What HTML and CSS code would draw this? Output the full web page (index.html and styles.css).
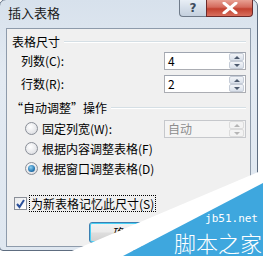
FILE: index.html
```html
<!DOCTYPE html>
<html>
<head>
<meta charset="utf-8">
<link rel="stylesheet" href="styles.css">
</head>
<body>
<div class="window">
  <div class="titlebar">
    <span class="title">插入表格</span>
    <div class="caption-btns">
      <div class="btn-help">?</div>
      <div class="btn-close">
        <svg width="16" height="12" viewBox="0 0 16 12"><path d="M2 1 L14 11 M14 1 L2 11" stroke="#fff" stroke-width="3" stroke-linecap="round"/></svg>
      </div>
    </div>
  </div>
  <div class="client">
    <div class="group-head"><span>表格尺寸</span><i class="sep"></i></div>
    <div class="row first">
      <span class="label">列数(<u>C</u>):</span>
      <div class="spin"><span class="val">4</span><div class="arrows"><b class="up"></b><b class="down"></b></div></div>
    </div>
    <div class="row second">
      <span class="label">行数(<u>R</u>):</span>
      <div class="spin"><span class="val">2</span><div class="arrows"><b class="up"></b><b class="down"></b></div></div>
    </div>
    <div class="group-head g2"><span>“自动调整”操作</span><i class="sep"></i></div>
    <div class="radio-row r1">
      <span class="radio"></span><span class="rlabel">固定列宽(<u>W</u>):</span>
      <div class="spin disabled"><span class="val">自动</span><div class="arrows"><b class="up"></b><b class="down"></b></div></div>
    </div>
    <div class="radio-row">
      <span class="radio"></span><span class="rlabel">根据内容调整表格(<u>F</u>)</span>
    </div>
    <div class="radio-row">
      <span class="radio on"></span><span class="rlabel">根据窗口调整表格(<u>D</u>)</span>
    </div>
    <div class="check-row">
      <span class="check"><svg width="11" height="11" viewBox="0 0 11 11"><path d="M2 6 L4.5 9 L9 2" fill="none" stroke="#2a4f9a" stroke-width="2"/></svg></span>
      <span class="clabel">为新表格记忆此尺寸(<u>S</u>)</span>
    </div>
    <div class="btn-row">
      <div class="button">确定</div>
    </div>
  </div>
</div>
<svg class="watermark" width="263" height="256" viewBox="0 0 263 256">
  <polygon points="60,256 263,170 263,185 123,256" fill="#ffffff"/>
  <polygon points="123,256 263,183 263,256" fill="#3ea7de"/>
</svg>
<div class="wm-text">
  <div class="wm-url">jb51.net</div>
  <div class="wm-name">脚本之家</div>
</div>
</body>
</html>
```
FILE: styles.css
```css
html, body {
  margin: 0;
  padding: 0;
  width: 263px;
  height: 256px;
  overflow: hidden;
  background: #ffffff;
  font-family: "SimSun", "Noto Sans CJK SC", "Liberation Sans", sans-serif;
  font-size: 12px;
  color: #000;
}
.window {
  position: relative;
  width: 259px;
  height: 252px;
  margin-left: -1px;
  margin-top: -1px;
  border: 1px solid #5e6d80;
  border-radius: 7px 7px 4px 4px;
  background: linear-gradient(180deg, #d7e1ec 0%, #e3eaf2 30%, #dfe7f0 100%);
  box-sizing: border-box;
  display: flex;
  flex-direction: column;
}
.titlebar {
  height: 28px;
  display: flex;
  align-items: flex-start;
  justify-content: space-between;
  box-sizing: border-box;
}
.title {
  margin-top: 5px;
  margin-left: 8px;
  font-size: 13px;
  line-height: 16px;
  color: #1a1a1a;
}
.caption-btns {
  display: flex;
  margin-right: 4px;
}
.btn-help {
  width: 27px;
  height: 17px;
  box-sizing: border-box;
  border: 1px solid #6f7b8a;
  border-top: none;
  border-right: none;
  border-radius: 0 0 0 4px;
  background: linear-gradient(180deg, #e8eef5 0%, #d5dee9 50%, #c4d0de 100%);
  color: #3c4a5c;
  font-family: "DejaVu Sans", sans-serif;
  font-size: 12px;
  line-height: 16px;
  text-align: center;
  font-weight: bold;
}
.btn-close {
  width: 47px;
  height: 17px;
  box-sizing: border-box;
  border: 1px solid #6c2a2a;
  border-top: none;
  border-radius: 0 0 4px 0;
  background: linear-gradient(180deg, #e8a093 0%, #d46a5c 45%, #c2412f 55%, #d86f5e 100%);
  display: flex;
  align-items: center;
  justify-content: center;
}
.client {
  margin: 0 6px 3px 6px;
  height: 221px;
  border: 1px solid #8e9bab;
  background: #f0f0f0;
  box-sizing: border-box;
  padding: 6px 4px 0 5px;
  display: flex;
  flex-direction: column;
}
.group-head {
  display: flex;
  align-items: center;
  height: 14px;
  line-height: 14px;
}
.group-head span { white-space: nowrap; margin-right: 4px; }
.group-head .sep {
  flex: 1;
  height: 0;
  border-top: 1px solid #d5dfe5;
  border-bottom: 1px solid #ffffff;
}
.g2 { margin-top: 8px; margin-left: -1px; }
.row {
  display: flex;
  align-items: center;
  justify-content: space-between;
  height: 18px;
  padding-left: 9px;
}
.row.first { margin-top: 3px; }
.row.second { margin-top: 5px; }
.label u, .rlabel u, .clabel u { text-decoration: none; }
.spin {
  width: 82px;
  height: 18px;
  box-sizing: border-box;
  border: 1px solid #abadb3;
  border-top-color: #9fa5b0;
  background: #fff;
  display: flex;
  align-items: center;
  justify-content: space-between;
}
.spin .val { padding-left: 3px; line-height: 16px; }
.spin.disabled { background: #f4f4f4; border-color: #c6c8cc; color: #8d8d8d; }
.arrows {
  width: 15px;
  height: 16px;
  display: flex;
  flex-direction: column;
  margin-right: 1px;
}
.arrows b {
  flex: 1;
  position: relative;
  background: linear-gradient(180deg, #f2f4f8, #d9e0ea);
  border: 1px solid #c5ccd7;
  border-radius: 2px;
}
.arrows b::after {
  content: "";
  position: absolute;
  left: 4px;
  top: 2px;
  border-left: 3px solid transparent;
  border-right: 3px solid transparent;
}
.arrows .up::after { border-bottom: 3px solid #4d5a6e; }
.arrows .down::after { border-top: 3px solid #4d5a6e; top: 2px; }
.spin.disabled .arrows b { background: #f3f3f3; border-color: #dcdcdc; }
.spin.disabled .arrows .up::after { border-bottom-color: #b5b5b5; }
.spin.disabled .arrows .down::after { border-top-color: #b5b5b5; }
.radio-row {
  display: flex;
  align-items: center;
  height: 20px;
  padding-left: 13px;
}
.radio-row.r1 { margin-top: 4px; }
.radio-row .spin { margin-left: auto; }
.radio {
  width: 11px;
  height: 11px;
  border-radius: 50%;
  border: 1px solid #8a8f98;
  background: radial-gradient(circle at 40% 35%, #ffffff 0%, #e6e7ea 60%, #cfd2d6 100%);
  margin-right: 4px;
  flex: none;
  position: relative;
}
.radio.on::after {
  content: "";
  position: absolute;
  left: 2px; top: 2px;
  width: 7px; height: 7px;
  border-radius: 50%;
  background: radial-gradient(circle at 40% 35%, #8fd0f0 0%, #2779b4 60%, #123f6e 100%);
}
.check-row {
  display: flex;
  align-items: center;
  height: 18px;
  margin-top: 16px;
  padding-left: 2px;
}
.check {
  width: 11px;
  height: 11px;
  border: 1px solid #8a8f98;
  background: linear-gradient(135deg, #e9eaec, #ffffff);
  margin-right: 2px;
  display: flex;
  align-items: center;
  justify-content: center;
  flex: none;
}
.clabel {
  border: 1px dotted #000;
  padding: 0 1px;
  line-height: 15px;
}
.btn-row {
  display: flex;
  gap: 8px;
  margin-top: 9px;
  padding-left: 77px;
}
.button {
  width: 73px;
  height: 21px;
  box-sizing: border-box;
  border: 1px solid #3c7fb1;
  border-radius: 3px;
  background: linear-gradient(180deg, #f2f2f2 0%, #ebebeb 45%, #dddddd 55%, #cfcfcf 100%);
  box-shadow: inset 0 0 0 1px #48d0f5;
  text-align: center;
  line-height: 19px;
}
.watermark {
  position: absolute;
  left: 0;
  top: 0;
}
.wm-text {
  position: absolute;
  right: 1px;
  top: 212px;
  width: 110px;
  color: #fff;
  text-align: right;
}
.wm-url {
  font-family: "DejaVu Sans Mono", monospace;
  font-size: 11px;
  line-height: 13px;
  height: 13px;
  margin-right: 4px;
}
.wm-name {
  font-family: "Noto Sans CJK SC", sans-serif;
  font-size: 22px;
  line-height: 26px;
  height: 26px;
  margin-top: 4px;
  font-weight: 300;
}
```
